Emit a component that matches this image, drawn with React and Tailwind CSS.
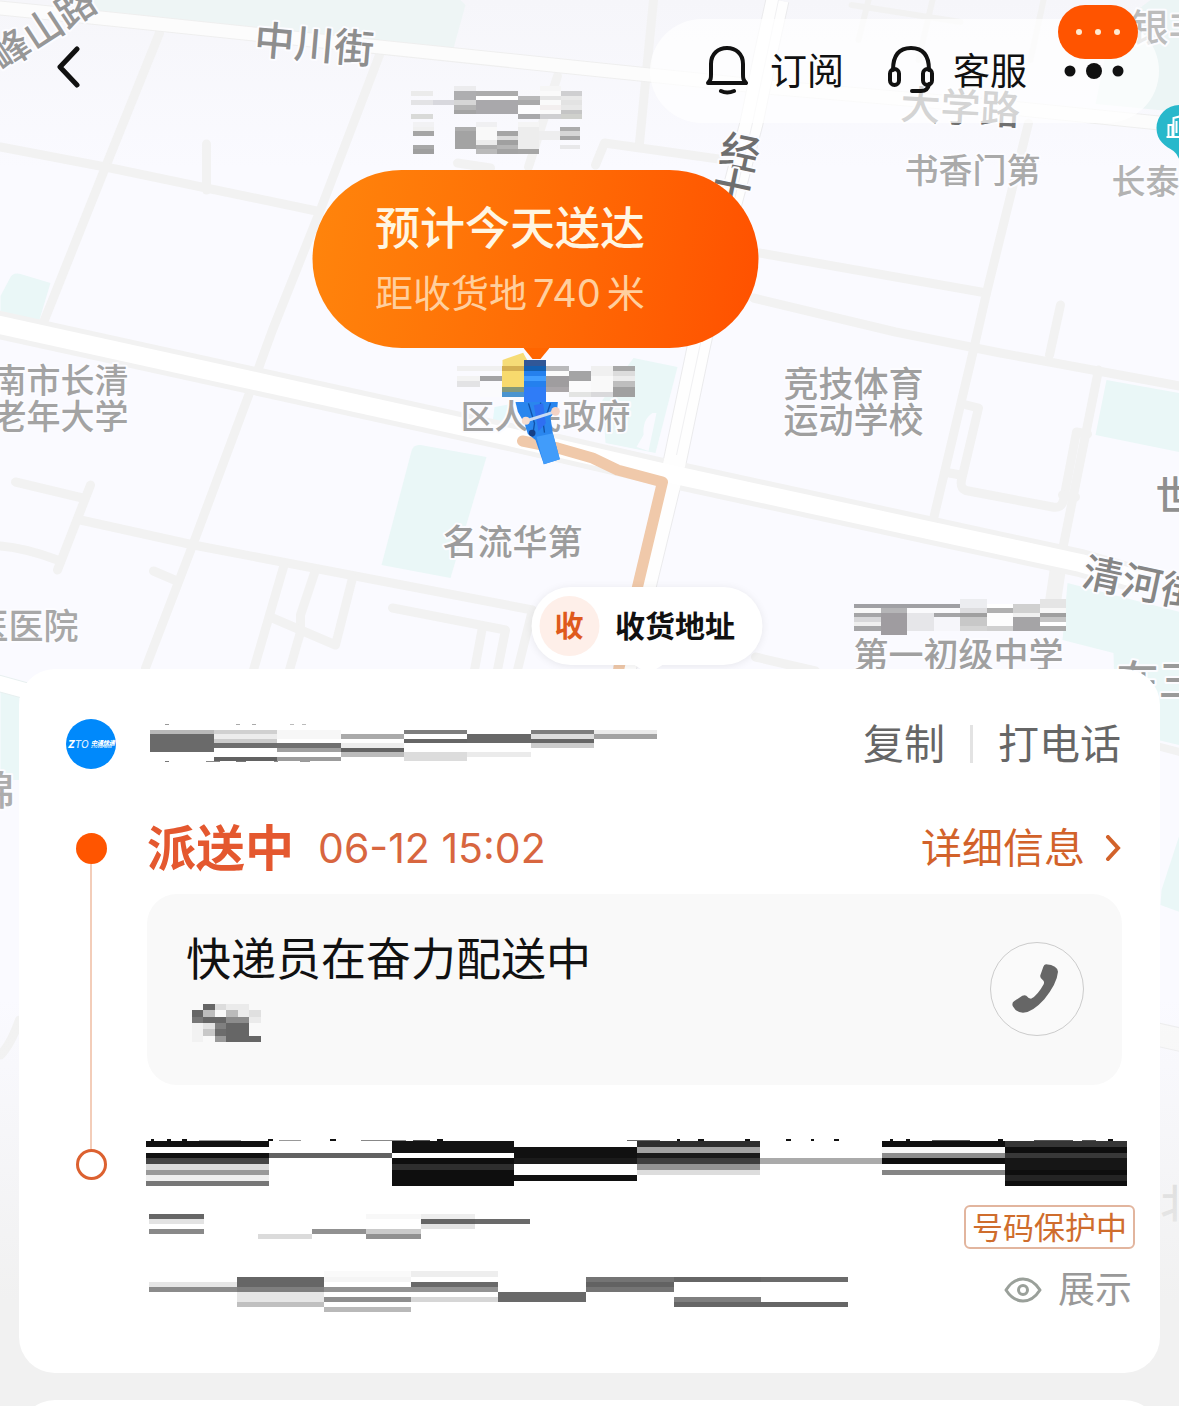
import React from "react";

const FONT = "font-['Inter','Noto_Sans_CJK_SC',sans-serif]";

/* Each block is [x, y, width, height, colour]. */
function Blocks({ data }) {
  return data.map(([x, y, w, h, c], i) => (
    <rect key={i} x={x} y={y} width={w} height={h} fill={c} shapeRendering="crispEdges" />
  ));
}

function Mosaic({ width, height, data, label }) {
  return (
    <svg role="img" aria-label={label} width={width} height={height} viewBox={`0 0 ${width} ${height}`} className="block shrink">
      <Blocks data={data} />
    </svg>
  );
}

const TRACKING = [
  [0, 6, 64, 4, "#b9b9b9"], [0, 10, 64, 18, "#6a6a6a"],
  [64, 6, 63, 4, "#d0d0d0"], [64, 10, 63, 5, "#ececec"], [64, 15, 63, 4, "#cccccc"], [64, 19, 63, 5, "#6e6e6e"], [64, 33, 63, 4, "#626262"],
  [127, 6, 64, 9, "#f7f7f7"], [127, 19, 64, 5, "#707070"], [127, 24, 64, 4, "#a0a0a0"], [127, 33, 64, 4, "#9c9c9c"],
  [191, 10, 63, 5, "#aaaaaa"], [191, 19, 63, 5, "#ededed"], [191, 24, 63, 4, "#636363"], [191, 28, 63, 5, "#bbbbbb"],
  [254, 6, 63, 4, "#7e7e7e"], [254, 15, 63, 4, "#666666"], [254, 28, 63, 9, "#dcdcdc"],
  [317, 10, 64, 9, "#686868"], [317, 28, 64, 5, "#ebebeb"],
  [381, 6, 63, 4, "#7e7e7e"], [381, 10, 63, 5, "#dddddd"], [381, 15, 63, 4, "#666666"], [381, 19, 63, 5, "#cccccc"],
  [444, 6, 63, 4, "#ebebeb"], [444, 10, 63, 5, "#a3a3a3"],
  [15, 0, 4, 1, "#999999"], [86, 0, 4, 1, "#aaaaaa"], [102, 0, 4, 1, "#aaaaaa"], [140, 0, 4, 1, "#bbbbbb"], [152, 0, 4, 1, "#bbbbbb"],
  [15, 37, 4, 1, "#777777"], [56, 37, 14, 1, "#888888"], [86, 37, 10, 1, "#777777"], [124, 37, 4, 1, "#888888"], [150, 37, 10, 1, "#999999"],
];

const COURIER_NAME = [
  [11, 0, 12, 6, "#666666"], [23, 0, 11, 6, "#dcdcdc"], [34, 0, 23, 6, "#ebebeb"],
  [0, 6, 11, 7, "#666666"], [11, 6, 12, 7, "#bdbdbd"], [34, 6, 12, 7, "#bbbbbb"], [46, 6, 11, 7, "#ececec"], [57, 6, 12, 7, "#e0e0e0"],
  [0, 13, 11, 6, "#777777"], [11, 13, 23, 6, "#666666"], [34, 13, 23, 6, "#8c8c8c"], [57, 13, 12, 6, "#ebebeb"],
  [0, 19, 11, 19, "#f2f2f2"], [11, 19, 12, 6, "#e3e3e3"], [23, 19, 11, 6, "#808080"], [34, 19, 23, 19, "#666666"],
  [11, 25, 12, 7, "#c8c8c8"], [23, 25, 11, 7, "#6c6c6c"], [23, 32, 11, 6, "#999999"], [57, 32, 12, 6, "#666666"],
];

const ADDRESS = [
  [0, 3, 123, 6, "#111111"], [0, 15, 123, 5, "#111111"], [0, 20, 123, 6, "#444444"], [0, 26, 123, 6, "#dadada"], [0, 32, 123, 5, "#999999"], [0, 37, 123, 6, "#eeeeee"], [0, 43, 123, 5, "#777777"],
  [123, 15, 123, 5, "#626262"],
  [246, 3, 122, 12, "#131313"], [246, 20, 122, 6, "#0e0e0e"], [246, 26, 122, 6, "#2e2e2e"], [246, 32, 122, 16, "#0e0e0e"],
  [368, 9, 123, 11, "#111111"], [368, 20, 123, 6, "#1b1b1b"], [368, 37, 123, 6, "#111111"],
  [491, 3, 123, 6, "#2e2e2e"], [491, 9, 123, 6, "#a2a2a2"], [491, 15, 123, 5, "#1a1a1a"], [491, 20, 123, 6, "#3d3d3d"], [491, 26, 123, 6, "#939393"], [491, 32, 123, 5, "#dddddd"],
  [614, 20, 122, 6, "#aaaaaa"],
  [736, 3, 123, 6, "#0e0e0e"], [736, 9, 123, 6, "#f8f8f8"], [736, 15, 123, 5, "#8c8c8c"], [736, 20, 123, 6, "#0e0e0e"], [736, 32, 123, 5, "#858585"],
  [859, 3, 122, 6, "#363636"], [859, 9, 122, 6, "#0e0e0e"], [859, 15, 122, 5, "#383838"], [859, 20, 122, 12, "#161616"], [859, 32, 122, 5, "#0e0e0e"], [859, 37, 122, 6, "#242424"], [859, 43, 122, 5, "#0e0e0e"],
  [5, 1, 3, 2, "#111111"], [21, 1, 4, 2, "#111111"], [36, 1, 5, 2, "#111111"], [53, 2, 42, 1, "#999999"], [122, 1, 5, 2, "#111111"],
  [133, 2, 22, 1, "#999999"], [184, 1, 6, 2, "#111111"], [215, 2, 45, 1, "#888888"], [267, 2, 17, 1, "#555555"], [291, 1, 6, 2, "#111111"],
  [481, 2, 33, 1, "#666666"], [531, 1, 3, 2, "#111111"], [552, 1, 6, 2, "#111111"], [599, 1, 5, 2, "#111111"], [640, 1, 5, 2, "#111111"],
  [665, 1, 3, 2, "#111111"], [688, 1, 5, 2, "#111111"], [744, 1, 3, 2, "#111111"], [760, 1, 4, 2, "#111111"], [786, 2, 38, 1, "#555555"],
  [852, 1, 5, 2, "#111111"], [888, 2, 39, 1, "#555555"], [936, 2, 14, 1, "#555555"], [962, 1, 5, 2, "#111111"],
];

const RECEIVER = [
  [0, 0, 55, 5, "#666666"], [0, 5, 55, 5, "#e3e3e3"], [0, 15, 55, 5, "#898989"],
  [109, 20, 54, 5, "#dbdbdb"], [163, 15, 54, 5, "#919191"],
  [217, 0, 55, 5, "#f8f8f8"], [217, 15, 55, 5, "#cacaca"], [217, 20, 55, 5, "#919191"],
  [272, 0, 54, 5, "#eeeeee"], [272, 5, 54, 5, "#666666"], [272, 10, 54, 5, "#e3e3e3"], [326, 5, 55, 5, "#6a6a6a"],
];

const ORDER = [
  [0, 11, 88, 5, "#e6e6e6"], [0, 16, 88, 5, "#8b8b8b"],
  [88, 6, 87, 10, "#666666"], [88, 16, 87, 5, "#7f7f7f"], [88, 21, 87, 10, "#e6e6e6"], [88, 31, 87, 5, "#c0c0c0"],
  [175, 0, 87, 6, "#fafafa"], [175, 6, 87, 5, "#f5f5f5"], [175, 16, 87, 5, "#939393"], [175, 26, 87, 5, "#8f8f8f"], [175, 36, 87, 5, "#b9b9b9"],
  [262, 0, 87, 6, "#eeeeee"], [262, 11, 87, 5, "#696969"], [262, 16, 87, 5, "#939393"], [262, 26, 87, 5, "#d6d6d6"],
  [349, 21, 88, 10, "#696969"],
  [437, 6, 88, 5, "#747474"], [437, 11, 88, 5, "#626262"], [437, 16, 88, 5, "#747474"],
  [525, 6, 87, 5, "#666666"], [525, 26, 87, 5, "#7f7f7f"], [525, 31, 87, 5, "#666666"],
  [612, 6, 87, 5, "#6b6b6b"], [612, 31, 87, 5, "#666666"],
];

const PLACE_TOP = [
  [33, 33, 66, 15, "#ebebeb"], [33, 60, 66, 15, "#e3e3e5"], [33, 102, 66, 15, "#d9dad8"], [99, 60, 63, 15, "#d8d8dd"],
  [162, 18, 66, 15, "#ececee"], [162, 33, 66, 27, "#aeaeb0"], [162, 60, 66, 15, "#d6d6d6"], [162, 75, 66, 15, "#b4b4b4"], [162, 90, 66, 12, "#a4a4a4"],
  [228, 33, 126, 15, "#acacac"], [228, 48, 126, 12, "#ffffff"], [228, 60, 126, 42, "#a9a8ab"],
  [354, 48, 66, 12, "#b8b8ba"], [354, 60, 66, 15, "#aaaaaa"], [354, 75, 66, 27, "#fdfdfe"], [354, 102, 66, 15, "#a9a9ab"],
  [420, 18, 63, 15, "#f6f6f6"], [420, 33, 63, 15, "#fafafa"], [420, 48, 63, 12, "#e5e5e5"], [420, 60, 63, 15, "#fafafa"], [420, 75, 63, 15, "#f3efef"], [420, 90, 63, 12, "#fafafa"], [420, 102, 63, 15, "#cfcfd1"],
  [483, 33, 63, 15, "#cfcfd1"], [483, 48, 63, 12, "#e9e9e9"], [483, 60, 63, 15, "#e3e3e3"], [483, 75, 63, 15, "#e8e8e8"], [483, 90, 63, 12, "#c5c5c5"], [483, 102, 63, 15, "#cfd0cc"],
  [39, 126, 63, 15, "#f2f2f4"], [39, 141, 63, 12, "#f0f0f0"], [39, 153, 63, 15, "#a5a5a5"], [39, 195, 63, 12, "#a8a8a8"], [39, 207, 63, 15, "#9f9f9f"],
  [165, 141, 63, 12, "#aeaeae"], [165, 153, 63, 54, "#a3a3a3"],
  [228, 126, 63, 15, "#f0f0f2"], [228, 141, 63, 39, "#f9f9f9"], [228, 180, 63, 15, "#ececec"], [228, 195, 63, 12, "#adadad"], [228, 207, 63, 15, "#bababa"],
  [291, 153, 63, 15, "#a5a5a5"], [291, 168, 63, 12, "#dcdcdc"], [291, 180, 63, 15, "#a0a0a0"], [291, 195, 63, 12, "#b5b5b5"], [291, 207, 63, 15, "#a3a3a3"],
  [354, 126, 63, 15, "#f5f5f5"], [354, 141, 63, 66, "#ededed"], [354, 207, 63, 15, "#a5a5a5"], [417, 153, 63, 27, "#eeeeef"],
  [480, 141, 60, 12, "#acacac"], [480, 153, 60, 15, "#d6d6d6"], [480, 168, 60, 12, "#a5a5a5"], [480, 195, 60, 12, "#e8e8ea"],
];

const PLACE_GOV = [
  [51, 78, 135, 15, "#f0f0f0"], [51, 108, 69, 15, "#f3f3f3"], [51, 123, 69, 18, "#e3e3e5"], [120, 108, 66, 15, "#a3a3a5"], [120, 123, 66, 48, "#fbfbfd"],
  [186, 78, 66, 15, "#d5b052"], [186, 93, 66, 48, "#f8da6d"], [186, 141, 66, 15, "#84987a"], [186, 156, 66, 15, "#4a94cf"],
  [252, 60, 66, 18, "#315797"], [252, 78, 66, 15, "#1260b3"], [252, 93, 66, 15, "#2580ed"], [252, 108, 66, 15, "#409dff"], [252, 123, 66, 18, "#2480ee"], [252, 141, 66, 45, "#2f7cf7"],
  [318, 78, 69, 15, "#b9b9bb"], [318, 93, 69, 15, "#fafafa"], [318, 108, 69, 33, "#9f9d9f"], [318, 141, 69, 15, "#aaa6a9"],
  [387, 93, 66, 30, "#a4a4a5"], [387, 123, 66, 33, "#fbfbfc"], [387, 156, 66, 15, "#e3e4e3"],
  [453, 78, 66, 30, "#f0f0f0"], [453, 108, 66, 48, "#f9f9f9"], [453, 156, 66, 15, "#d9d9db"],
  [519, 78, 66, 15, "#a8a8a8"], [519, 93, 66, 15, "#dcdcdc"], [519, 108, 66, 15, "#ececec"], [519, 123, 66, 18, "#bebebe"], [519, 141, 66, 30, "#a0a0a0"],
];

const PLACE_SCHOOL = [
  [853, 604, 106, 4, "#a0a0a4"], [853, 608, 27, 5, "#f8f8f8"], [853, 613, 27, 4, "#a5a5a7"], [853, 617, 27, 5, "#d8d8da"], [853, 622, 27, 4, "#efefef"], [853, 626, 27, 5, "#a6a6a8"],
  [880, 608, 26, 5, "#b5b5b7"], [880, 613, 26, 22, "#9f9ca0"], [906, 608, 53, 5, "#fafafc"], [906, 613, 27, 18, "#e6e6e9"], [933, 613, 26, 4, "#a5a5a7"], [933, 617, 26, 14, "#f6f6fa"],
  [959, 599, 27, 9, "#ecedf0"], [959, 608, 27, 5, "#dddddf"], [959, 613, 27, 4, "#a0a0a0"], [959, 617, 27, 9, "#c8c8c8"], [959, 626, 27, 5, "#d5d5d5"],
  [986, 604, 26, 4, "#ffffff"], [986, 608, 26, 5, "#b0b0b0"], [986, 613, 26, 13, "#fdfdfd"], [986, 626, 26, 5, "#d0d0d0"],
  [1012, 604, 27, 9, "#d0d0d0"], [1012, 613, 27, 4, "#f0f0f0"], [1012, 617, 27, 14, "#a5a4a6"],
  [1039, 599, 26, 9, "#e5e5e5"], [1039, 608, 26, 5, "#f8f8f8"], [1039, 613, 26, 4, "#a0a0a0"], [1039, 617, 26, 5, "#c5c5c5"], [1039, 622, 26, 4, "#ffffff"], [1039, 626, 26, 5, "#aaaaaa"],
];

/* Place names: text, x, y (vertical centre), size, rotation, colour, anchor. */
const LABELS = [
  ["峰山路", 41, 26, 39, -33, "#979797", "middle"],
  ["中川街", 314, 42, 40, 5, "#8e8e8e", "middle"],
  ["经", 740, 150, 40, 12, "#6f6f6f", "middle"],
  ["十", 732, 185, 40, 12, "#6f6f6f", "middle"],
  ["大学路", 960, 105, 40, 3, "#707070", "middle"],
  ["书香门第", 904, 168, 34, 0, "#aaaaaa", "start"],
  ["长泰", 1111, 179, 34, 0, "#b2b2b2", "start"],
  ["银丰", 1130, 24, 38, 0, "#bcbcbc", "start"],
  ["南市长清", 128, 378, 34, 0, "#a3a3a3", "end"],
  ["老年大学", 128, 414, 34, 0, "#a3a3a3", "end"],
  ["区人民政府", 460, 414, 34, 0, "#a3a3a3", "start"],
  ["名流华第", 442, 539, 35, 0, "#9c9c9c", "start"],
  ["竞技体育", 783, 381, 35, 0, "#9f9f9f", "start"],
  ["运动学校", 783, 417, 35, 0, "#9f9f9f", "start"],
  ["世", 1155, 493, 40, 0, "#8f8f8f", "start"],
  ["清河街", 1142, 581, 40, 12, "#868686", "middle"],
  ["第一初级中学", 853, 652, 35, 0, "#a0a0a0", "start"],
  ["中医医院", 78, 623, 35, 0, "#a8a8a8", "end"],
  ["在三", 1116, 677, 42, 0, "#9a9a9a", "start"],
  ["锦", 14, 788, 40, 0, "#adadad", "end"],
  ["北", 1160, 1201, 40, 0, "#c4c4c4", "start"],
];

const STREETS = [
  "M159 33L105 167L42 325",
  "M379 55L321 207L272 330L249 393L193 543L145 668",
  "M0 147L110 168L316 211",
  "M206 144V190",
  "M557 76L528 167",
  "M457 163L490 168",
  "M15 482L82 498",
  "M90 485L57 570",
  "M0 546Q25 548 57 560",
  "M80 520L193 545L532 610L517 670",
  "M153 571L174 580",
  "M283 567L253 670",
  "M314 573L300 615V632L289 670",
  "M272 618L335 645L352 578",
  "M392 608L505 630L497 670",
  "M482 627L474 670",
  "M759 253L986 293",
  "M753 298L895 332L1000 353L1179 386",
  "M1028 123L986 293L973 350L932 523",
  "M1060 305L1049 355",
  "M1098 370L1062 550",
  "M966 405L978 408L961 480Q959 490 968 491L1052 507Q1061 509 1063 500L1076 432L1087 434",
  "M949 473L960 475",
  "M1062 495L1075 497",
  "M595 165L604 143L718 159",
  "M653 0L639 143",
  "M755 657L815 671",
];

function CityMap() {
  return (
    <svg width="1179" height="1406" viewBox="0 0 1179 1406" className="absolute top-0 left-0 block overflow-visible" aria-hidden="true">
      <defs>
        <linearGradient id="land" x1="0" y1="0" x2="0" y2="1">
          <stop offset="0" stopColor="#f6f6fa" />
          <stop offset="0.12" stopColor="#fafaff" />
          <stop offset="1" stopColor="#fafaff" />
        </linearGradient>
        <linearGradient id="fade" x1="0" y1="0" x2="0" y2="1">
          <stop offset="0" stopColor="#f1f1f1" stopOpacity="0" />
          <stop offset="1" stopColor="#f1f1f1" />
        </linearGradient>
      </defs>
      <rect x="-1000" width="3179" height="1406" fill="url(#land)" />
      <g fill="#eaf7f7">
        <path d="M60 0H460L465 5L452 52L110 16Z" fill="#eef5f5" />
        <path d="M20 274L50 283L38 323L0 312V296L9 279Q12 272 20 274Z" />
        <path d="M420 445L486 457L450 578L381 565L411 451Q413 444 420 445Z" />
        <path d="M633 358L677 367L655 453L605 443L602 400Z" />
        <path d="M1106 380L1179 393V452L1095 435Z" />
        <path d="M1067 583L1179 612V745L1115 730L1113 653L1062 640Z" />
        <path d="M1150 0H1179V112L1095 104L1110 30Z" fill="#ecf5f5" />
        <path d="M0 690L19 696V780H0Z" />
        <path d="M1179 835V912L1160 905L1161 890Z" />
      </g>
      <path d="M652 413q-10 6 -9 22l-7 12l12 4l8 -38z" fill="#fafaff" />
      <path d="M494 407l22 -4l-8 20h-16z" fill="#e6f8fb" />
      <g fill="none" stroke="#f2f2f2" strokeWidth="9" strokeLinejoin="round" strokeLinecap="round">
        {STREETS.map((d) => (
          <path key={d} d={d} />
        ))}
        <path d="M1058 565L1052 605" strokeWidth="16" />
        <path d="M851 5L960 22M868 0L858 40M932 0L918 60M1043 0L1030 60" strokeWidth="6" />
        <path d="M1160 747L1179 752" strokeWidth="8" />
        <path d="M19 1020Q10 1045 0 1055" />
      </g>
      <g fill="none" strokeLinejoin="round">
        <path d="M-10 7L100 18L600 70L766 87L1000 107L1179 125" stroke="#efefef" strokeWidth="15" />
        <path d="M-10 7L100 18L600 70L766 87L1000 107L1179 125" stroke="#fcfcfc" strokeWidth="13" />
        <path d="M777 0L766 50L751 123L729 207L698 348L674 463L644 587L624 670" stroke="#ebebed" strokeWidth="24" />
        <path d="M-10 323L268 384L509 437L670 474L932 531L1080 563L1140 580" stroke="#f2f2f2" strokeWidth="28" />
        <path d="M777 0L766 50L751 123L729 207L698 348L674 463L644 587L624 670" stroke="#fefefe" strokeWidth="22" />
        <path d="M-10 323L268 384L509 437L670 474L932 531L1080 563L1140 580" stroke="#ffffff" strokeWidth="18" />
        <path d="M778 0L752 123L699 348L676 455" stroke="#f0f0f2" strokeWidth="1" />
        <path d="M-10 681L30 692" stroke="#e8f0f0" strokeWidth="17" />
        <path d="M-10 681L30 692" stroke="#ffffff" strokeWidth="15" />
        <path d="M1150 1033L1190 1042" stroke="#ededee" strokeWidth="24" />
        <path d="M1150 1033L1190 1042" stroke="#f9f9f9" strokeWidth="22" />
        <path d="M522 441L557 448L592 458L617 470L662 482L637 587L618 670" stroke="#f0c9aa" strokeWidth="11" strokeLinecap="round" />
      </g>
      <g
        fontFamily="'Noto Sans CJK SC', sans-serif"
        fontWeight="500"
        stroke="#fcfcff"
        strokeWidth="4"
        strokeLinejoin="round"
        paintOrder="stroke"
        dominantBaseline="central"
      >
        {LABELS.map(([t, x, y, s, r, c, a]) => (
          <text key={t} x={x} y={y} fontSize={s} fill={c} textAnchor={a} transform={`rotate(${r} ${x} ${y})`}>
            {t}
          </text>
        ))}
      </g>
      <g>
        <path d="M1179 105a23 23 0 0 0 -23 23c0 13 9 18 17 23q4 3 6 9q2 -6 6 -9c8 -5 17 -10 17 -23a23 23 0 0 0 -23 -23z" fill="#28b8cb" />
        <path d="M1168 136v-11h4v11M1173 136v-18l8 -2v20M1166 137h16M1176 121v12" stroke="#ffffff" strokeWidth="2" fill="none" />
      </g>
      <g transform="translate(400 80) scale(0.33333)">
        <Blocks data={PLACE_TOP} />
      </g>
      <Blocks data={PLACE_SCHOOL} />
      <g transform="translate(440 340) scale(0.33333)">
        <path d="M186 60L248 38L260 60L252 80H186Z" fill="#f6dc77" />
        <Blocks data={PLACE_GOV} />
        <path d="M225 186H352L350 206L330 232L337 280L358 358L310 373L285 300L262 282L252 250L232 215Z" fill="#2a86ee" />
        <path d="M264 190l18 60l-6 40M300 188l12 90M330 190l-10 30" stroke="#1152a8" strokeWidth="4" fill="none" />
        <path d="M280 196l28 -6l8 60l-22 24z" fill="#2f6ff2" />
        <path d="M288 290L337 280L358 358L310 373Z" fill="#419cfa" />
        <circle cx="275" cy="279" r="10" fill="#153f86" />
        <path d="M256 243L345 215" stroke="#c9daf3" strokeWidth="9" />
        <circle cx="256" cy="242" r="12" fill="#f6dccf" />
        <circle cx="345" cy="214" r="13" fill="#f3d3c6" />
      </g>
      <rect x="-1000" y="1000" width="3179" height="300" fill="url(#fade)" />
      <rect x="-1000" y="1300" width="3179" height="106" fill="#f1f1f1" />
    </svg>
  );
}

function BellIcon() {
  return (
    <svg width="42" height="50" viewBox="0 0 42 50" fill="none" stroke="#111111" strokeWidth="4" strokeLinecap="round" strokeLinejoin="round" aria-hidden="true">
      <path d="M2 37C5 34 5 32 5 28V18C5 8 12 2 21 2S37 8 37 18V28C37 32 37 34 40 37Z" />
      <path d="M15 45Q21 48 28 45" />
    </svg>
  );
}

function HeadsetIcon() {
  return (
    <svg width="46" height="50" viewBox="0 0 46 50" fill="none" stroke="#111111" strokeWidth="4" strokeLinecap="round" aria-hidden="true">
      <path d="M5 24C5 10 10 2 23 2S41 10 41 24" />
      <rect x="2" y="23" width="9" height="16" rx="4.500" />
      <rect x="35" y="23" width="9" height="16" rx="4.500" />
      <path d="M41 38Q40 45 33 45H24" />
    </svg>
  );
}

function Header() {
  return (
    <header className="relative flex items-center justify-between pt-[19px] pr-5 pl-[48px]">
      <button type="button" aria-label="返回" className="-mt-2 flex h-12 w-10 items-center justify-center">
        <svg width="24" height="42" viewBox="0 0 24 42" fill="none" stroke="#111111" strokeWidth="5" strokeLinecap="round" strokeLinejoin="round" aria-hidden="true">
          <path d="M21 3L4 21L21 39" />
        </svg>
      </button>
      <nav className="flex h-[104px] items-center rounded-full bg-white/70 pr-[35px] pl-14 text-[37px] leading-none text-[#111111]">
        <button type="button" className="flex items-center gap-[22px]">
          <BellIcon />
          订阅
        </button>
        <button type="button" className="ml-[44px] flex items-center gap-[19px]">
          <HeadsetIcon />
          客服
        </button>
        <button type="button" aria-label="更多" className="relative ml-[37px] flex h-12 items-center">
          <svg width="60" height="18" viewBox="0 0 60 18" fill="#111111" aria-hidden="true">
            <circle cx="6" cy="9" r="5.500" />
            <circle cx="30" cy="9" r="8" />
            <circle cx="54" cy="9" r="5.500" />
          </svg>
          <span className="absolute -top-[42px] -left-1.5 flex h-[54px] w-20 items-center justify-center gap-[13px] rounded-[27px] bg-[#ff5400]">
            <i className="size-1.5 rounded-full bg-[#ffe9d0]" />
            <i className="size-1.5 rounded-full bg-[#ffe9d0]" />
            <i className="size-1.5 rounded-full bg-[#ffe9d0]" />
          </span>
        </button>
      </nav>
    </header>
  );
}

function MapPins() {
  return (
    <>
      <div className="absolute top-[170px] left-[312px] flex h-[178px] w-[446px] flex-col justify-center rounded-full bg-linear-100 from-[#ff850c] to-[#ff5000] pt-1 pl-[63px]">
        <p className="text-[45px] leading-[64px] font-medium text-[#fff6e2]">预计今天送达</p>
        <p className="text-[38px] leading-[64px] font-normal text-[#ffcf9e]">
          距收货地<span className="mx-1.5">740</span>米
        </p>
        <svg className="absolute top-full left-[211px]" width="26" height="12" viewBox="0 0 26 12" aria-hidden="true">
          <path d="M0 0H26L17 11H9Z" fill="#ff6500" />
        </svg>
      </div>
      <div className="absolute top-[587px] left-[531px] flex h-[78px] w-[231px] items-center gap-4 rounded-full bg-white pl-2 shadow-[0_1px_8px_rgba(0,0,0,0.08)]">
        <span className="flex size-[60px] items-center justify-center rounded-full bg-[#feefe9] text-[29px] leading-none font-bold text-[#df5a1c]">收</span>
        <span className="text-[30px] font-bold text-[#111111]">收货地址</span>
        <svg className="absolute top-full left-[103px]" width="28" height="6" viewBox="0 0 28 6" aria-hidden="true">
          <path d="M0 0H28L20 5H8Z" fill="#ffffff" />
        </svg>
      </div>
    </>
  );
}

function CarrierLogo() {
  return (
    <svg width="50" height="50" viewBox="0 0 50 50" role="img" aria-label="中通快递">
      <circle cx="25" cy="25" r="25" fill="#0089fb" />
      <g fill="#ffffff" fontStyle="italic" fontWeight="700">
        <text x="2" y="29" fontSize="10" fontWeight="800" fontFamily="Inter, sans-serif">
          Z<tspan fontWeight="500" fillOpacity="0.85">TO</tspan>
        </text>
        <text x="25" y="26" fontSize="6" fontWeight="900" fontFamily="'Noto Sans CJK SC', sans-serif">中通快递</text>
        <text x="25" y="29" fontSize="3" fontFamily="Inter, sans-serif">ZTO EXPRESS</text>
      </g>
    </svg>
  );
}

function DeliveryCard() {
  return (
    <section className="relative mx-[19px] rounded-[36px] bg-white pt-[50px] pr-[25px] pb-[61px] pl-[47px]">
      <div className="mr-[14px] flex h-[50px] items-center">
        <CarrierLogo />
        <div className="ml-[34px] flex min-w-0 flex-1">
          <Mosaic width={507} height={40} data={TRACKING} label="运单号" />
        </div>
        <div className="flex shrink-0 items-center text-[41px] leading-none text-[#666666]">
          <button type="button">复制</button>
          <i className="mx-[25px] h-[38px] w-[3px] bg-[#e3e3e3]" />
          <button type="button">打电话</button>
        </div>
      </div>

      <ol className="mt-[50px]">
        <li className="flex gap-[31px]">
          <div className="flex w-[50px] shrink-0 flex-col items-center">
            <i className="mt-[14px] size-[31px] shrink-0 rounded-full bg-[#ff5500]" />
            <i className="-mb-[11px] w-0.5 flex-1 bg-[#f3cdb9]" />
          </div>
          <div className="mr-[13px] flex-1 pb-[53px]">
            <div className="flex h-[60px] items-center pr-px pb-0.5">
              <h2 className="text-[49px] leading-none font-bold text-[#e4582f]">派送中</h2>
              <time className="ml-6 text-[41px] leading-none text-[#d8663f]">06-12 15:02</time>
              <a href="#details" className="ml-auto flex items-center gap-5 text-[41px] leading-none text-[#d2622a]">
                详细信息
                <svg width="16" height="26" viewBox="0 0 16 26" fill="none" stroke="currentColor" strokeWidth="4" strokeLinecap="round" aria-hidden="true">
                  <path d="M3 2L13 13L3 24" />
                </svg>
              </a>
            </div>
            <div className="mt-[15px] flex h-[191px] items-center justify-between rounded-[30px] bg-[#f9f9f9] pr-[38px] pb-0.5 pl-[39px]">
              <div className="pb-2">
                <p className="text-[45px] leading-[64px] text-[#111111]">快递员在奋力配送中</p>
                <div className="mt-3 ml-1.5">
                  <Mosaic width={69} height={38} data={COURIER_NAME} label="快递员" />
                </div>
              </div>
              <button type="button" aria-label="联系快递员" className="flex size-[94px] items-center justify-center rounded-full border border-[#cccccc] bg-[#fafafa] pr-1">
                <svg width="46" height="49" viewBox="515 795 138 146" fill="#666666" aria-hidden="true">
                  <path d="M617 795Q611 796 609 803L600 828Q598 837 608 843Q613 848 610 855Q592 888 572 899Q564 898 558 890Q553 887 546 890L521 906Q513 912 518 922Q528 940 548 941Q578 938 612 900Q650 854 653 818Q652 798 617 795Z" />
                </svg>
              </button>
            </div>
          </div>
        </li>

        <li className="flex gap-[30px]">
          <div className="flex w-[50px] shrink-0 justify-center">
            <i className="mt-[11px] size-[31px] rounded-full border-[3px] border-[#dc6130] bg-white" />
          </div>
          <div className="min-w-0 flex-1">
            <Mosaic width={981} height={48} data={ADDRESS} label="收货地址" />
            <div className="mt-[19px] flex items-center justify-between pl-[3px]">
              <Mosaic width={436} height={26} data={RECEIVER} label="收件人" />
              <span className="flex h-11 shrink-0 items-center rounded-md border-2 border-[#e2b59e] px-1.5 text-[31px] leading-none text-[#cf6d2d]">
                号码保护中
              </span>
            </div>
            <div className="mt-[22px] flex items-center justify-between pl-[3px]">
              <Mosaic width={699} height={41} data={ORDER} label="详细地址" />
              <button type="button" className="mr-[3px] flex shrink-0 items-center gap-4 pb-1 text-[37px] leading-none text-[#999999]">
                <svg width="38" height="26" viewBox="0 0 38 26" fill="none" stroke="#9aa09a" strokeWidth="3" strokeLinejoin="round" aria-hidden="true">
                  <path d="M2 13Q9 2 19 2T36 13Q29 24 19 24T2 13Z" />
                  <circle cx="19" cy="13" r="4.500" />
                </svg>
                展示
              </button>
            </div>
          </div>
        </li>
      </ol>
    </section>
  );
}

export default function App() {
  return (
    <main className={`relative flex min-h-screen flex-col overflow-hidden bg-[#f1f1f1] ${FONT}`}>
      <div className="absolute top-0 left-1/2 h-[1406px] w-[1179px] -translate-x-1/2">
        <CityMap />
        <MapPins />
      </div>
      <div className="h-[669px] shrink-0">
        <Header />
      </div>
      <DeliveryCard />
      <div className="relative mx-[19px] mt-[27px] min-h-[6px] flex-1 overflow-hidden">
        <div className="absolute inset-x-0 top-0 h-20 rounded-t-[36px] bg-white" />
      </div>
    </main>
  );
}
